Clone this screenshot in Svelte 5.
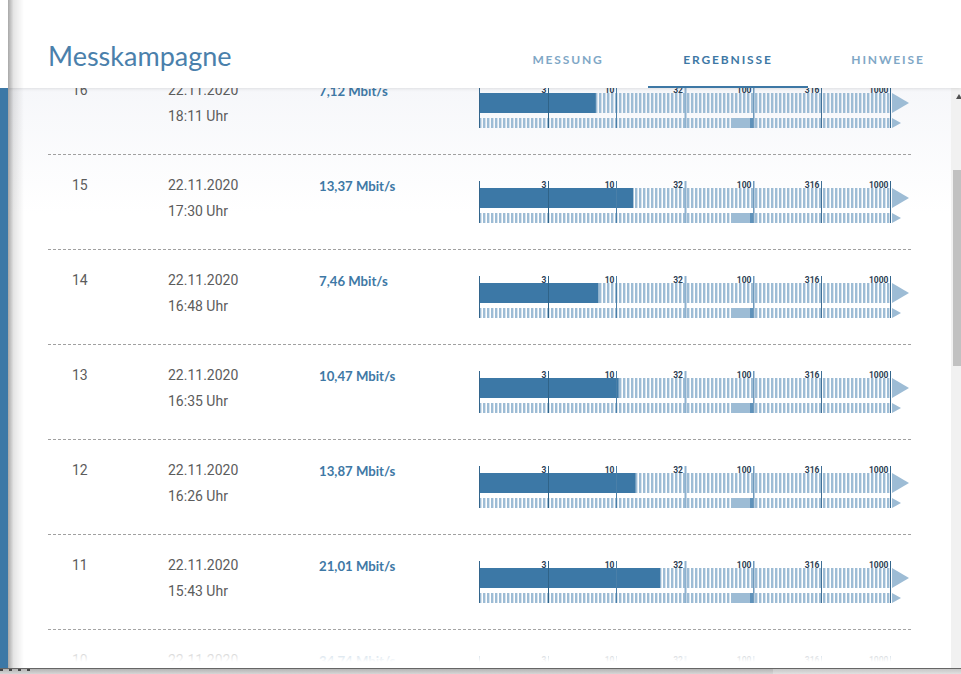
<script>
  const rows = [
    { nr: 16, date: '22.11.2020', time: '18:11 Uhr', speed: 7.12 },
    { nr: 15, date: '22.11.2020', time: '17:30 Uhr', speed: 13.37 },
    { nr: 14, date: '22.11.2020', time: '16:48 Uhr', speed: 7.46 },
    { nr: 13, date: '22.11.2020', time: '16:35 Uhr', speed: 10.47 },
    { nr: 12, date: '22.11.2020', time: '16:26 Uhr', speed: 13.87 },
    { nr: 11, date: '22.11.2020', time: '15:43 Uhr', speed: 21.01 },
    { nr: 10, date: '22.11.2020', time: '', speed: 34.74 }
  ]

  const tabs = ['Messung', 'Ergebnisse', 'Hinweise']
  const activeTab = 'Ergebnisse'

  // log scale, 137px per decade from 1 to 1000
  const decade = 137
  const scale = (v) => Math.log10(v) * decade

  const ticks = [
    { label: '3', x: 69, w: 1, color: '#2f6388' },
    { label: '10', x: 137, w: 1, color: '#4a7fa8' },
    { label: '32', x: 205.5, w: 2, color: '#8fb2cf' },
    { label: '100', x: 274, w: 1.5, color: '#6f9abd' },
    { label: '316', x: 342, w: 1, color: '#3f6f96' },
    { label: '1000', x: 411, w: 1, color: '#33658c' }
  ]

  const formatSpeed = (v) => v.toFixed(2).replace('.', ',') + ' Mbit/s'
</script>

<div class="screen">
  <div class="stage">
    <div class="strip"></div>

    <div class="panel">
      <header class="head">
        <h1>Messkampagne</h1>
        <nav class="tabs">
          {#each tabs as tab}
            <div class="tab" class:active={tab === activeTab}>{tab}</div>
          {/each}
        </nav>
      </header>

      <div class="body">
        <div class="rows">
          <div class="list">
            {#each rows as row}
              <div class="row">
                <div class="nr">{row.nr}</div>
                <div class="when">
                  <div>{row.date}</div>
                  <div>{row.time}</div>
                </div>
                <div class="speed">{formatSpeed(row.speed)}</div>
                <svg class="chart" width="432" height="43" viewBox="0 0 432 43">
                  <defs>
                    <pattern id="hatch-{row.nr}" width="4" height="4" patternUnits="userSpaceOnUse">
                      <rect width="2.4" height="4" fill="#9dbcd5" />
                    </pattern>
                  </defs>
                  <rect y="7" width="411" height="20" fill="url(#hatch-{row.nr})" />
                  <rect y="32" width="411" height="10" fill="url(#hatch-{row.nr})" />
                  <rect y="7" width={scale(row.speed)} height="20" fill="#3c78a6" />
                  <rect x="252" y="32" width="19" height="10" fill="#9dbcd5" />
                  <rect x="271" y="32" width="4" height="10" fill="#5f92ba" />
                  <polygon points="413,7 430,17 413,27" fill="#9dbcd5" />
                  <polygon points="413,32 422,37 413,42" fill="#9dbcd5" />
                  <rect width="1" height="42" fill="#33658c" />
                  {#each ticks as tick}
                    <rect x={tick.x} width={tick.w} height="42" fill={tick.color} />
                    <text x={tick.x - 1.5} y="7" text-anchor="end">{tick.label}</text>
                  {/each}
                </svg>
              </div>
            {/each}
          </div>
          <div class="fade"></div>
        </div>

        <div class="scrollbar">
          <span class="arrow"></span>
          <div class="thumb"></div>
        </div>
      </div>

      <div class="edge"></div>
    </div>
  </div>

  <div class="taskbar">
    <span class="marks"></span>
    <span class="taskbar-rest"></span>
  </div>
</div>

<style>
  :global(body) {
    margin: 0;
    background: #fff;
  }

  .screen {
    width: 961px;
    height: 674px;
    overflow: hidden;
    display: flex;
    flex-direction: column;
  }

  .stage {
    height: 668px;
    display: flex;
  }

  .strip {
    width: 8px;
    flex: none;
    background: linear-gradient(#fff 88px, #3c78a6 88px);
  }

  .panel {
    position: relative;
    flex: 1;
    min-width: 0;
    display: flex;
    flex-direction: column;
    overflow: hidden;
    background: #fff;
  }

  .edge {
    position: absolute;
    left: 0;
    top: 0;
    bottom: 0;
    width: 16px;
    z-index: 3;
    background: linear-gradient(to right, rgba(0, 0, 0, 0.34), rgba(0, 0, 0, 0.1) 35%, rgba(0, 0, 0, 0));
  }

  .head {
    position: relative;
    z-index: 2;
    height: 88px;
    flex: none;
    display: flex;
    background: #fff;
    box-shadow: 0 1px 3px rgba(0, 0, 0, 0.1);
  }

  h1 {
    width: 440px;
    flex: none;
    margin: 0;
    padding: 39px 0 0 40px;
    font-family: 'Lato', sans-serif;
    font-size: 27px;
    line-height: 34px;
    font-weight: 400;
    color: #4a80ab;
  }

  .tabs {
    display: flex;
    flex: none;
  }

  .tab {
    width: 160px;
    box-sizing: border-box;
    padding-top: 52px;
    text-align: center;
    font-family: 'Lato', sans-serif;
    font-size: 12px;
    line-height: 16px;
    font-weight: 700;
    letter-spacing: 1.85px;
    text-transform: uppercase;
    color: #80a7c6;
  }

  .tab.active {
    color: #3e78a5;
    border-bottom: 2px solid #3e78a5;
  }

  .body {
    flex: 1;
    min-height: 0;
    display: flex;
  }

  .rows {
    position: relative;
    flex: 1;
    min-width: 0;
    overflow: hidden;
    background: linear-gradient(#f6f7fa, #fff 125px);
  }

  .list {
    margin: -28px 40px 0 40px;
  }

  .row {
    height: 95px;
    box-sizing: border-box;
    border-bottom: 1px dashed #a0a0a0;
    display: flex;
    align-items: flex-start;
    padding-top: 17px;
    font-family: 'Roboto', sans-serif;
    font-size: 14px;
    line-height: 26px;
    color: #5c5c5c;
  }

  .nr {
    width: 120px;
    padding-left: 24px;
    box-sizing: border-box;
    flex: none;
  }

  .when {
    width: 151px;
    flex: none;
  }

  .speed {
    width: 160px;
    flex: none;
    padding-top: 1px;
    font-family: 'Lato', sans-serif;
    font-size: 13.2px;
    font-weight: 700;
    color: #3e78a5;
  }

  .chart {
    flex: none;
    margin-top: 9px;
  }

  .chart text {
    font-family: 'Roboto', sans-serif;
    font-size: 8.5px;
    font-weight: 700;
    fill: #2c4054;
  }

  .fade {
    position: absolute;
    left: 0;
    right: 0;
    bottom: 0;
    height: 40px;
    background: linear-gradient(rgba(255, 255, 255, 0), #fff 85%);
  }

  .scrollbar {
    position: relative;
    width: 10px;
    flex: none;
    background: #f1f1f1;
  }

  .arrow {
    position: absolute;
    top: 6px;
    right: -1px;
    border: 3px solid transparent;
    border-top: 0;
    border-bottom: 5px solid #505050;
  }

  .thumb {
    position: absolute;
    top: 82px;
    left: 2px;
    right: 0;
    height: 196px;
    background: #c1c1c1;
  }

  .taskbar {
    flex: 1;
    display: flex;
    border-top: 1px solid #666;
    background: linear-gradient(#b4b4b4, #d6d6d6);
  }

  .marks {
    width: 30px;
    height: 2px;
    background: repeating-linear-gradient(to right, #444 0 3px, transparent 3px 9px);
  }

  .taskbar-rest {
    margin-left: auto;
    width: 188px;
    background: rgba(255, 255, 255, 0.25);
  }
</style>
